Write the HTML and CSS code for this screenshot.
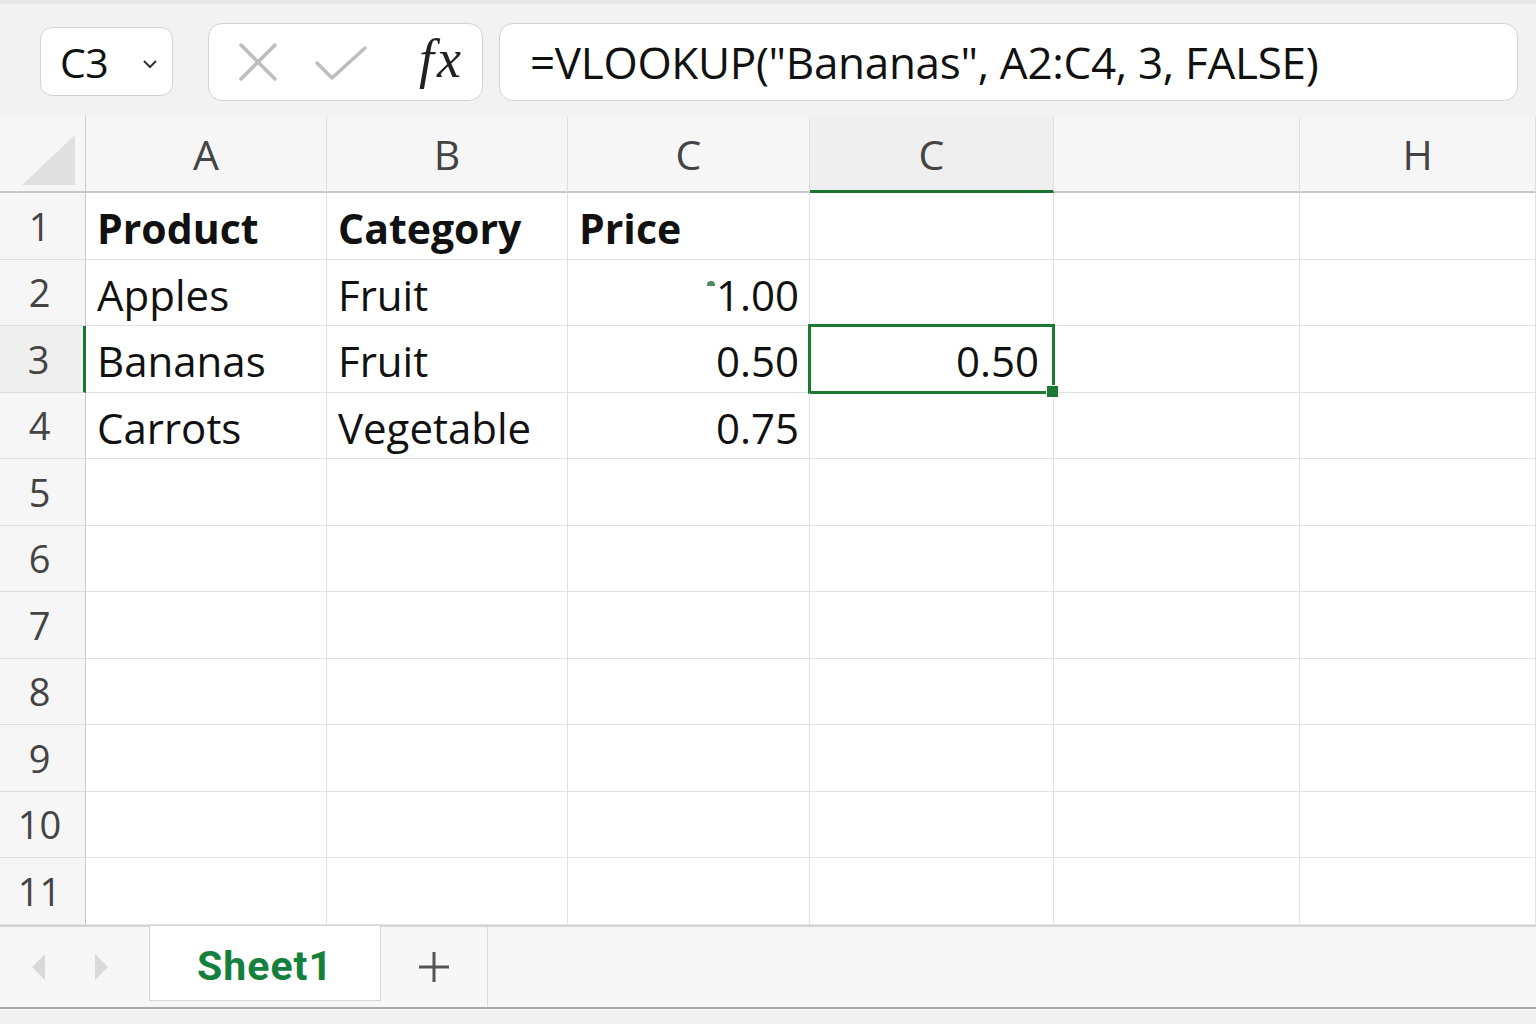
FILE: index.html
```html
<!doctype html>
<html lang="en">
<head>
<meta charset="UTF-8">
<title>Sheet1</title>
<link rel="stylesheet" href="styles.css">
</head>
<body>
  <div class="toolbar">
    <div class="namebox">
      <span class="namebox-text">C3</span>
      <svg class="chevron" width="16" height="10" viewBox="0 0 16 10"><path d="M2 2 L8 8 L14 2" fill="none" stroke="#333" stroke-width="2"/></svg>
    </div>
    <div class="actions">
      <svg class="icon-x" width="40" height="40" viewBox="0 0 40 40"><path d="M3 3 L37 37 M37 3 L3 37" stroke="#bdbdbd" stroke-width="3.5" stroke-linecap="round"/></svg>
      <svg class="icon-check" width="54" height="38" viewBox="0 0 54 38"><path d="M3 18 L18 33 L51 3" fill="none" stroke="#bdbdbd" stroke-width="3.5" stroke-linecap="round" stroke-linejoin="round"/></svg>
      <span class="fx">fx</span>
    </div>
    <div class="formula">=VLOOKUP("Bananas", A2:C4, 3, FALSE)</div>
  </div>

  <div class="sheet">
    <div class="corner"><span class="corner-tri"></span></div>
    <div class="colhead">A</div>
    <div class="colhead">B</div>
    <div class="colhead">C</div>
    <div class="colhead active">C</div>
    <div class="colhead"></div>
    <div class="colhead">H</div>

    <div class="rowhead">1</div>
    <div class="cell bold">Product</div>
    <div class="cell bold">Category</div>
    <div class="cell bold">Price</div>
    <div class="cell"></div>
    <div class="cell"></div>
    <div class="cell"></div>

    <div class="rowhead">2</div>
    <div class="cell">Apples</div>
    <div class="cell">Fruit</div>
    <div class="cell num"><span class="mark"></span>1.00</div>
    <div class="cell"></div>
    <div class="cell"></div>
    <div class="cell"></div>

    <div class="rowhead active">3</div>
    <div class="cell">Bananas</div>
    <div class="cell">Fruit</div>
    <div class="cell num">0.50</div>
    <div class="cell num selected">0.50</div>
    <div class="cell"></div>
    <div class="cell"></div>

    <div class="rowhead">4</div>
    <div class="cell">Carrots</div>
    <div class="cell">Vegetable</div>
    <div class="cell num">0.75</div>
    <div class="cell"></div>
    <div class="cell"></div>
    <div class="cell"></div>

    <div class="rowhead">5</div><div class="cell"></div><div class="cell"></div><div class="cell"></div><div class="cell"></div><div class="cell"></div><div class="cell"></div>
    <div class="rowhead">6</div><div class="cell"></div><div class="cell"></div><div class="cell"></div><div class="cell"></div><div class="cell"></div><div class="cell"></div>
    <div class="rowhead">7</div><div class="cell"></div><div class="cell"></div><div class="cell"></div><div class="cell"></div><div class="cell"></div><div class="cell"></div>
    <div class="rowhead">8</div><div class="cell"></div><div class="cell"></div><div class="cell"></div><div class="cell"></div><div class="cell"></div><div class="cell"></div>
    <div class="rowhead">9</div><div class="cell"></div><div class="cell"></div><div class="cell"></div><div class="cell"></div><div class="cell"></div><div class="cell"></div>
    <div class="rowhead">10</div><div class="cell"></div><div class="cell"></div><div class="cell"></div><div class="cell"></div><div class="cell"></div><div class="cell"></div>
    <div class="rowhead">11</div><div class="cell"></div><div class="cell"></div><div class="cell"></div><div class="cell"></div><div class="cell"></div><div class="cell"></div>
  </div>

  <div class="tabbar">
    <div class="tabnav">
      <span class="arrow-left"></span>
      <span class="arrow-right"></span>
    </div>
    <div class="tab">Sheet1</div>
    <div class="addsheet">
      <svg width="34" height="34" viewBox="0 0 34 34"><path d="M17 2 V32 M2 17 H32" stroke="#555" stroke-width="3"/></svg>
    </div>
    <div class="tabrest"></div>
  </div>
  <div class="statusbar"></div>
</body>
</html>
```

FILE: styles.css
```css
*{ box-sizing:border-box; }
body{ margin:0; width:1536px; height:1024px; overflow:hidden; background:#fff; font-family:"Open Sans","Noto Sans",sans-serif; color:#111; }

/* toolbar */
.toolbar{ height:117px; background:#f2f2f2; border-top:4px solid #e7e7e7; display:flex; align-items:center; padding:2px 18px 0 40px; }
.namebox{ width:133px; height:69px; background:#fff; border:1.5px solid #d3d3d3; border-radius:12px; display:flex; align-items:center; padding:0 14px 0 19px; justify-content:space-between; }
.namebox-text{ font-size:41px; color:#111; letter-spacing:-0.5px; }
.chevron{ margin-top:4px; }
.actions{ margin-left:35px; width:275px; height:78px; background:#fff; border:1.5px solid #d3d3d3; border-radius:14px; display:flex; align-items:center; padding:0 18px 0 29px; }
.icon-check{ margin-left:36px; margin-top:4px; }
.fx{ margin-left:auto; font-family:"Liberation Serif","DejaVu Serif",serif; font-style:italic; font-size:54px; color:#222; margin-top:-6px; letter-spacing:3px; }
.formula{ margin-left:16px; flex:1; height:78px; background:#fff; border:1.5px solid #d3d3d3; border-radius:14px; display:flex; align-items:center; padding:0 0 0 30px; font-size:44px; color:#111; letter-spacing:-0.3px; }

/* grid */
.sheet{ display:grid; grid-template-columns:86px 241px 241px 242px 244px 246px 1fr; grid-template-rows:76px repeat(11, 66.5px); height:808px; }
.corner{ background:#f6f6f6; border-right:1.5px solid #c8c8c8; border-bottom:2px solid #c8c8c8; position:relative; }
.corner-tri{ position:absolute; left:22px; top:18px; width:0; height:0; border-left:53px solid transparent; border-bottom:50px solid #e0e0e0; }
.colhead{ background:#f6f6f6; border-right:1px solid #dedede; border-bottom:2px solid #c8c8c8; display:flex; align-items:center; justify-content:center; font-size:41px; color:#444; padding-top:0; }
.colhead.active{ background:#efefef; border-bottom:3px solid #17762f; }
.rowhead{ background:#f6f6f6; border-right:1.5px solid #c8c8c8; border-bottom:1px solid #dedede; display:flex; align-items:center; justify-content:center; font-size:38px; color:#444; padding-right:6px; }
.rowhead.active{ background:#efefef; border-right:3px solid #17762f; }
.cell{ border-right:1px solid #e2e2e2; border-bottom:1px solid #e2e2e2; display:flex; align-items:center; padding:4px 11px 0 11px; font-size:42px; color:#111; white-space:nowrap; position:relative; }
.cell.bold{ font-weight:700; font-size:41px; }
.cell.num{ justify-content:flex-end; padding-right:10px; }
.cell.selected{ padding-right:14px; }
.cell.selected::after{ content:""; position:absolute; left:-2px; top:-2px; right:-2px; bottom:-2px; border:3px solid #1b7a32; }
.cell.selected::before{ content:""; position:absolute; right:-6px; bottom:-6px; width:11px; height:11px; background:#1b7a32; border:1px solid #fff; z-index:2; }
.mark{ display:inline-block; width:8px; height:5px; border-radius:4px 4px 0 0; background:#4e8a63; margin-right:1px; align-self:flex-start; margin-top:17px; }

/* tabs */
.tabbar{ height:84px; background:#f7f7f7; border-top:2px solid #d5d5d5; display:flex; border-bottom:2px solid #a8a8a8; }
.tabnav{ width:149px; display:flex; align-items:center; padding-left:32px; gap:50px; }
.arrow-left{ width:0; height:0; border-top:13px solid transparent; border-bottom:13px solid transparent; border-right:13px solid #d9d9d9; }
.arrow-right{ width:0; height:0; border-top:13px solid transparent; border-bottom:13px solid transparent; border-left:13px solid #d9d9d9; }
.tab{ width:232px; height:75px; margin-top:-1px; background:#fff; border:1px solid #d6d6d6; border-top:none; display:flex; align-items:center; justify-content:center; font-family:"Roboto","Noto Sans",sans-serif; font-weight:700; font-size:41px; color:#15803d; padding-top:6px; letter-spacing:1px; }
.addsheet{ width:107px; display:flex; align-items:center; justify-content:center; border-right:1.5px solid #dcdcdc; }
.tabrest{ flex:1; }
.statusbar{ height:16px; background:#f0f0f0; border-top:1px solid #fff; }
```
